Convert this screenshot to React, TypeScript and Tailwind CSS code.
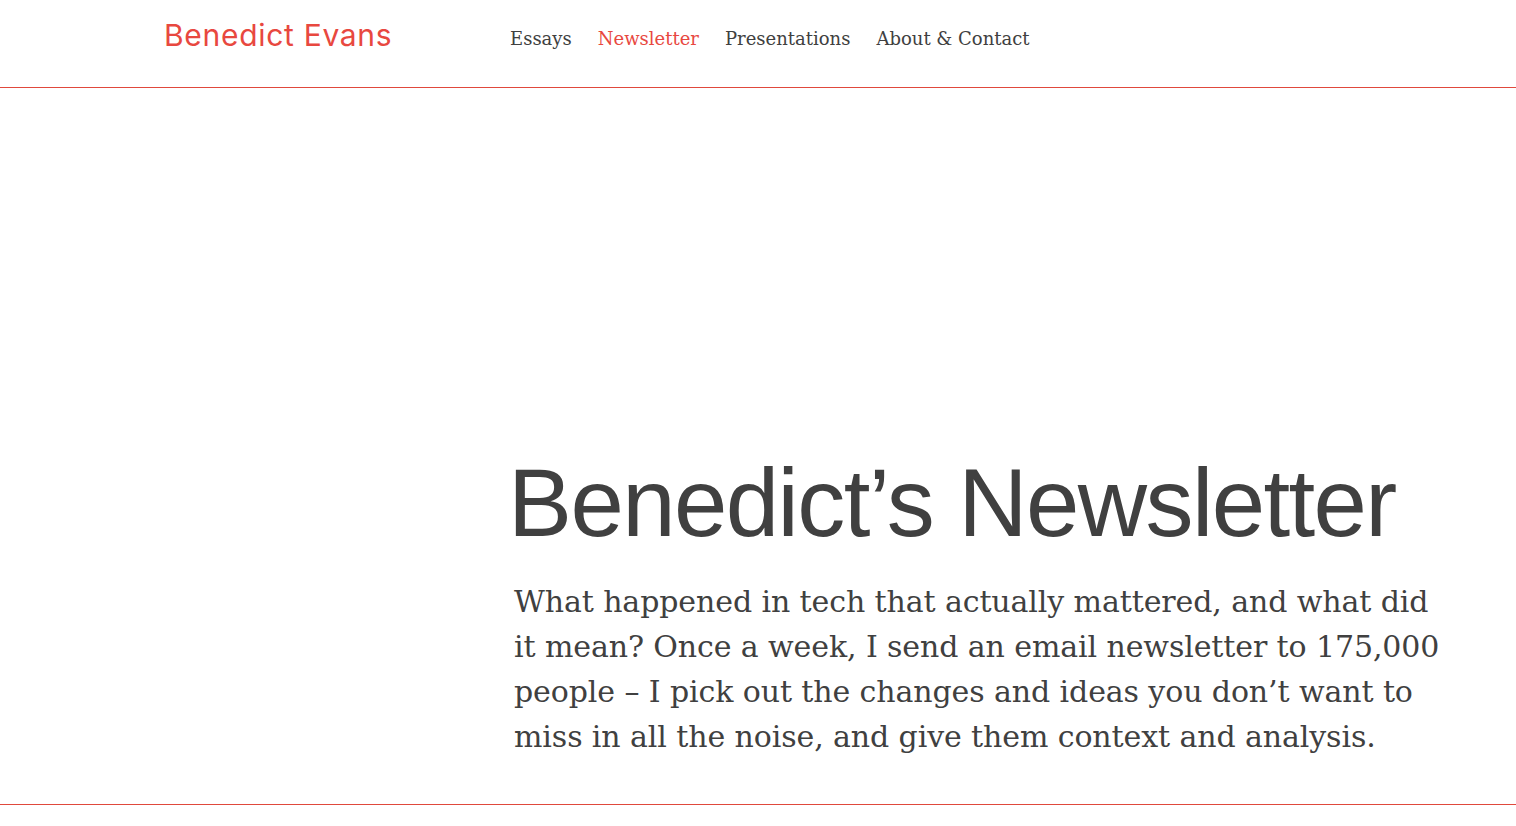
const navItems = [
  { label: 'Essays', active: false },
  { label: 'Newsletter', active: true },
  { label: 'Presentations', active: false },
  { label: 'About & Contact', active: false },
]

const App = () => {
  return (
    <div className="min-h-screen bg-white text-[#404040]">
      <header className="h-[88px] border-b border-[#e0493c]">
        <div className="flex items-start pl-[164px] pt-[17px]">
          <a
            href="#"
            className="w-[346px] shrink-0 text-[30px] leading-[36px] text-[#e8483f] tracking-[0.7px] font-['Inter',sans-serif]"
          >
            Benedict Evans
          </a>
          <nav className="flex gap-x-[26px] pt-[9px] font-['DejaVu_Serif',serif] text-[18px] leading-[26px]">
            {navItems.map((item) => (
              <a
                key={item.label}
                href="#"
                className={item.active ? 'text-[#e8483f]' : 'text-[#404040]'}
              >
                {item.label}
              </a>
            ))}
          </nav>
        </div>
      </header>

      <main className="border-b border-[#e0493c]">
        <div className="pl-[510px] pt-[360px] pb-[45px]">
          <h1 className="font-['Liberation_Sans',sans-serif] text-[96px] leading-[110px] tracking-[-1.6px] text-[#404040] -ml-[2px]">
            Benedict’s Newsletter
          </h1>
          <p className="mt-[21px] pl-[4px] w-[944px] font-['DejaVu_Serif',serif] text-[30px] leading-[45px] tracking-[-0.1px] text-[#404040]">
            What happened in tech that actually mattered, and what did it mean?
            Once a week, I send an email newsletter to 175,000 people – I pick
            out the changes and ideas you don’t want to miss in all the noise,
            and give them context and analysis.
          </p>
        </div>
      </main>
    </div>
  )
}

export default App
